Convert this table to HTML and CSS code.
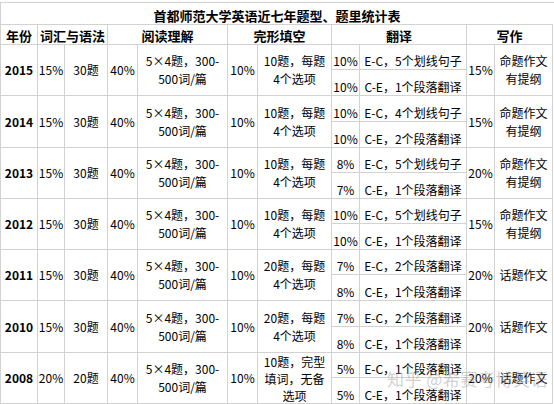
FILE: index.html
```html
<!DOCTYPE html>
<html lang="zh-CN">
<head>
<meta charset="utf-8">
<title>首都师范大学英语近七年题型、题里统计表</title>
<link rel="stylesheet" href="styles.css">
</head>
<body>
<div class="page">
  <div class="sheet">
    <div class="c title span-all">首都师范大学英语近七年题型、题里统计表</div>

    <div class="c head">年份</div>
    <div class="c head span2">词汇与语法</div>
    <div class="c head span2">阅读理解</div>
    <div class="c head span2">完形填空</div>
    <div class="c head span2">翻译</div>
    <div class="c head span2">写作</div>

    <!-- 2015 -->
    <div class="c year tall">2015</div>
    <div class="c tall">15%</div>
    <div class="c tall">30题</div>
    <div class="c tall">40%</div>
    <div class="c tall">5×4题，300-<br>500词/篇</div>
    <div class="c tall">10%</div>
    <div class="c tall">10题，每题<br>4个选项</div>
    <div class="c sub">10%</div>
    <div class="c sub">E-C，5个划线句子</div>
    <div class="c tall">15%</div>
    <div class="c tall">命题作文<br>有提纲</div>
    <div class="c sub">10%</div>
    <div class="c sub">C-E，1个段落翻译</div>

    <!-- 2014 -->
    <div class="c year tall">2014</div>
    <div class="c tall">15%</div>
    <div class="c tall">30题</div>
    <div class="c tall">40%</div>
    <div class="c tall">5×4题，300-<br>500词/篇</div>
    <div class="c tall">10%</div>
    <div class="c tall">10题，每题<br>4个选项</div>
    <div class="c sub">10%</div>
    <div class="c sub">E-C，4个划线句子</div>
    <div class="c tall">15%</div>
    <div class="c tall">命题作文<br>有提纲</div>
    <div class="c sub">10%</div>
    <div class="c sub">C-E，2个段落翻译</div>

    <!-- 2013 -->
    <div class="c year tall">2013</div>
    <div class="c tall">15%</div>
    <div class="c tall">30题</div>
    <div class="c tall">40%</div>
    <div class="c tall">5×4题，300-<br>500词/篇</div>
    <div class="c tall">10%</div>
    <div class="c tall">10题，每题<br>4个选项</div>
    <div class="c sub">8%</div>
    <div class="c sub">E-C，5个划线句子</div>
    <div class="c tall">20%</div>
    <div class="c tall">命题作文<br>有提纲</div>
    <div class="c sub">7%</div>
    <div class="c sub">C-E，1个段落翻译</div>

    <!-- 2012 -->
    <div class="c year tall">2012</div>
    <div class="c tall">15%</div>
    <div class="c tall">30题</div>
    <div class="c tall">40%</div>
    <div class="c tall">5×4题，300-<br>500词/篇</div>
    <div class="c tall">10%</div>
    <div class="c tall">10题，每题<br>4个选项</div>
    <div class="c sub">10%</div>
    <div class="c sub">E-C，5个划线句子</div>
    <div class="c tall">15%</div>
    <div class="c tall">命题作文<br>有提纲</div>
    <div class="c sub">10%</div>
    <div class="c sub">C-E，1个段落翻译</div>

    <!-- 2011 -->
    <div class="c year tall">2011</div>
    <div class="c tall">15%</div>
    <div class="c tall">30题</div>
    <div class="c tall">40%</div>
    <div class="c tall">5×4题，300-<br>500词/篇</div>
    <div class="c tall">10%</div>
    <div class="c tall">20题，每题<br>4个选项</div>
    <div class="c sub">7%</div>
    <div class="c sub">E-C，2个段落翻译</div>
    <div class="c tall">20%</div>
    <div class="c tall">话题作文</div>
    <div class="c sub">8%</div>
    <div class="c sub">C-E，1个段落翻译</div>

    <!-- 2010 -->
    <div class="c year tall">2010</div>
    <div class="c tall">15%</div>
    <div class="c tall">30题</div>
    <div class="c tall">40%</div>
    <div class="c tall">5×4题，300-<br>500词/篇</div>
    <div class="c tall">10%</div>
    <div class="c tall">20题，每题<br>4个选项</div>
    <div class="c sub">7%</div>
    <div class="c sub">E-C，2个段落翻译</div>
    <div class="c tall">20%</div>
    <div class="c tall">话题作文</div>
    <div class="c sub">8%</div>
    <div class="c sub">C-E，1个段落翻译</div>

    <!-- 2008 -->
    <div class="c year tall">2008</div>
    <div class="c tall">20%</div>
    <div class="c tall">20题</div>
    <div class="c tall">40%</div>
    <div class="c tall">5×4题，300-<br>500词/篇</div>
    <div class="c tall">10%</div>
    <div class="c tall three">10题，完型<br>填词，无备<br>选项</div>
    <div class="c sub">5%</div>
    <div class="c sub">E-C，1个段落翻译</div>
    <div class="c tall">20%</div>
    <div class="c tall">话题作文</div>
    <div class="c sub">5%</div>
    <div class="c sub">C-E，1个段落翻译</div>
  </div>
  <div class="watermark">知乎 @希赛考博英语</div>
</div>
</body>
</html>
```
FILE: styles.css
```css
html, body {
  margin: 0;
  padding: 0;
  background: #ffffff;
}

.page {
  position: relative;
  width: 554px;
  height: 404px;
  overflow: hidden;
  padding-top: 2px;
  box-sizing: border-box;
  font-family: "Noto Sans CJK SC", "Noto Sans", sans-serif;
  color: #000;
}

.sheet {
  display: grid;
  width: 553px;
  grid-template-columns: 37px 27px 43px 30px 90px 30px 74px 28px 107px 28px 58px;
  grid-template-rows:
    22px 20px
    25px 26px
    26px 26px
    25px 26px
    25px 26px
    25px 26px
    26px 26px
    25px 26px;
  border-top: 1px solid #d2d2d2;
  border-left: 1px solid #d2d2d2;
}

.c {
  box-sizing: border-box;
  border-right: 1px solid #d2d2d2;
  border-bottom: 1px solid #d2d2d2;
  display: flex;
  align-items: center;
  justify-content: center;
  text-align: center;
  white-space: nowrap;
  font-size: 12px;
  line-height: 18px;
  overflow: hidden;
  background: #fff;
}

.span-all {
  grid-column: 1 / -1;
}

.span2 {
  grid-column: span 2;
}

.title {
  border-right: none;
  align-items: flex-end;
  font-size: 13px;
  font-weight: 700;
  line-height: 14px;
  padding-bottom: 1px;
}

.head {
  align-items: flex-end;
  font-size: 13px;
  font-weight: 700;
  line-height: 14px;
  padding-bottom: 1px;
}

.tall {
  grid-row: span 2;
}

.year {
  font-weight: 700;
  font-size: 12px;
}

.three {
  line-height: 17px;
}

.sub {
  align-items: flex-end;
  line-height: 16px;
}

.watermark {
  position: absolute;
  left: 387px;
  top: 368px;
  font-size: 17px;
  line-height: 22px;
  white-space: nowrap;
  color: rgba(150, 150, 150, 0.45);
  font-family: "Noto Sans CJK SC", sans-serif;
  letter-spacing: 0.5px;
}
```
